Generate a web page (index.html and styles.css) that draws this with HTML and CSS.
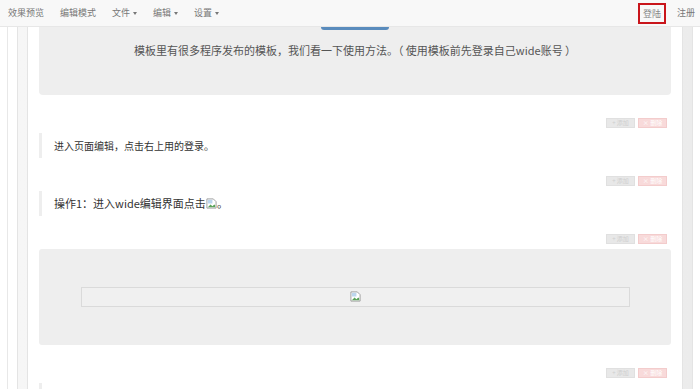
FILE: index.html
```html
<!DOCTYPE html>
<html lang="zh-CN">
<head>
	<meta charset="UTF-8">
	<title>wide 编辑</title>
	<link rel="stylesheet" href="styles.css">
</head>
<body>
	<div class="navbar">
		<ul class="nav">
			<li><a href="javascript:">效果预览</a></li>
			<li><a href="javascript:">编辑模式</a></li>
			<li><a href="javascript:">文件<span class="caret"></span></a></li>
			<li><a href="javascript:">编辑<span class="caret"></span></a></li>
			<li><a href="javascript:">设置<span class="caret"></span></a></li>
		</ul>
		<ul class="nav nav-right">
			<li><a class="login" href="javascript:">登陆</a></li>
			<li><a class="reg" href="javascript:">注册</a></li>
		</ul>
	</div>
	<div class="outer">
		<div class="frame">
			<div class="page">
				<div class="jumbotron">
					<div class="btn-tail"></div>
					<p>模板里有很多程序发布的模板，我们看一下使用方法。（ 使用模板前先登录自己wide账号 ）</p>
				</div>

				<div class="tools">
					<a class="btn-add" href="javascript:">+ 添加</a>
					<a class="btn-del" href="javascript:">× 删除</a>
				</div>
				<blockquote class="small-text">进入页面编辑，点击右上用的登录。</blockquote>

				<div class="tools">
					<a class="btn-add" href="javascript:">+ 添加</a>
					<a class="btn-del" href="javascript:">× 删除</a>
				</div>
				<blockquote>操作1：进入wide编辑界面点击<svg class="broken" viewBox="0 0 12 12"><path d="M1 1h7l3 3v7H1z" fill="#fff" stroke="#9a9a9a"/><path d="M2 10l3-3 2 2 2-2 1 1v2H2z" fill="#5aa35a"/><rect x="2" y="2" width="5" height="4" fill="#bcd6ee"/></svg>。</blockquote>

				<div class="tools">
					<a class="btn-add" href="javascript:">+ 添加</a>
					<a class="btn-del" href="javascript:">× 删除</a>
				</div>
				<div class="well">
					<div class="img-box"><svg class="broken" viewBox="0 0 12 12"><path d="M1 1h7l3 3v7H1z" fill="#fff" stroke="#9a9a9a"/><path d="M2 10l3-3 2 2 2-2 1 1v2H2z" fill="#5aa35a"/><rect x="2" y="2" width="5" height="4" fill="#bcd6ee"/></svg></div>
				</div>

				<div class="tools">
					<a class="btn-add" href="javascript:">+ 添加</a>
					<a class="btn-del" href="javascript:">× 删除</a>
				</div>
				<blockquote>&nbsp;</blockquote>
			</div>
		</div>
	</div>
</body>
</html>
```

FILE: styles.css
```css
html, body {
	margin: 0;
	padding: 0;
	background: #fff;
	overflow: hidden;
	font-family: "Noto Sans CJK SC", "Liberation Sans", sans-serif;
}
a {
	text-decoration: none;
}
.navbar {
	display: flex;
	justify-content: space-between;
	height: 26px;
	background: #f8f8f8;
	border-bottom: 1px solid #e7e7e7;
}
.nav {
	display: flex;
	margin: 0;
	padding: 0;
	list-style: none;
}
.nav a {
	display: block;
	padding: 0 8px;
	line-height: 26px;
	font-size: 9px;
	color: #777;
}
.caret {
	display: inline-block;
	width: 0;
	height: 0;
	margin-left: 3px;
	vertical-align: middle;
	border-top: 3px solid #777;
	border-left: 2.5px solid transparent;
	border-right: 2.5px solid transparent;
}
.nav .login {
	margin-top: 3px;
	padding: 0 3px;
	line-height: 17px;
	border: 2px solid #c9151b;
	color: #888;
}
.nav .reg {
	padding: 0 5px 0 11px;
}
.outer {
	margin-left: 7px;
	border-left: 1px solid #e8e8e8;
}
.frame {
	margin: 0 7px 0 9px;
	padding: 0 9px;
	background: linear-gradient(to right, #f6f6f6, #ececec);
	border-left: 1px solid #e4e4e4;
	border-right: 1px solid #e4e4e4;
}
.page {
	display: flex;
	flex-direction: column;
	background: #fff;
	border-left: 1px solid #e4e4e4;
	border-right: 1px solid #e4e4e4;
	padding: 0 11px;
	height: 380px;
}
.jumbotron {
	flex: none;
	height: 68px;
	margin-bottom: 5px;
	background: #eee;
	border-radius: 0 0 4px 4px;
}
.btn-tail {
	width: 68px;
	height: 3px;
	margin: 0 auto;
	background: #5a8cbd;
	border-radius: 0 0 5px 5px;
}
.jumbotron p {
	margin: 0;
	padding-top: 12px;
	text-align: center;
	font-size: 11px;
	line-height: 16px;
	color: #555;
}
.tools {
	flex: none;
	display: flex;
	justify-content: flex-end;
	gap: 3px;
	height: 9px;
	margin: 18px 4px 6px 0;
}
.tools a {
	display: block;
	width: 27px;
	height: 8px;
	line-height: 8px;
	font-size: 6px;
	text-align: center;
	color: #fff;
}
.btn-add {
	background: #e8e8e8;
	border: 1px solid #e0e0e0;
	color: #cfcfcf !important;
}
.btn-del {
	background: #f8dada;
	border: 1px solid #f3cccc;
}
blockquote {
	flex: none;
	margin: 0;
	padding: 0 0 0 12px;
	height: 25px;
	line-height: 25px;
	border-left: 3px solid #eee;
	font-size: 11px;
	color: #333;
}
.small-text {
	font-size: 10px;
}
.broken {
	width: 11px;
	height: 11px;
	vertical-align: -1px;
}
.well {
	flex: none;
	height: 58px;
	margin-bottom: 5px;
	padding: 38px 41px 0 42px;
	background: #eee;
	border-radius: 3px;
}
.img-box {
	height: 18px;
	text-align: center;
	border: 1px solid #dadada;
	background: #f0f0f0;
}
.img-box .broken {
	margin-top: 3px;
	vertical-align: top;
}
```
